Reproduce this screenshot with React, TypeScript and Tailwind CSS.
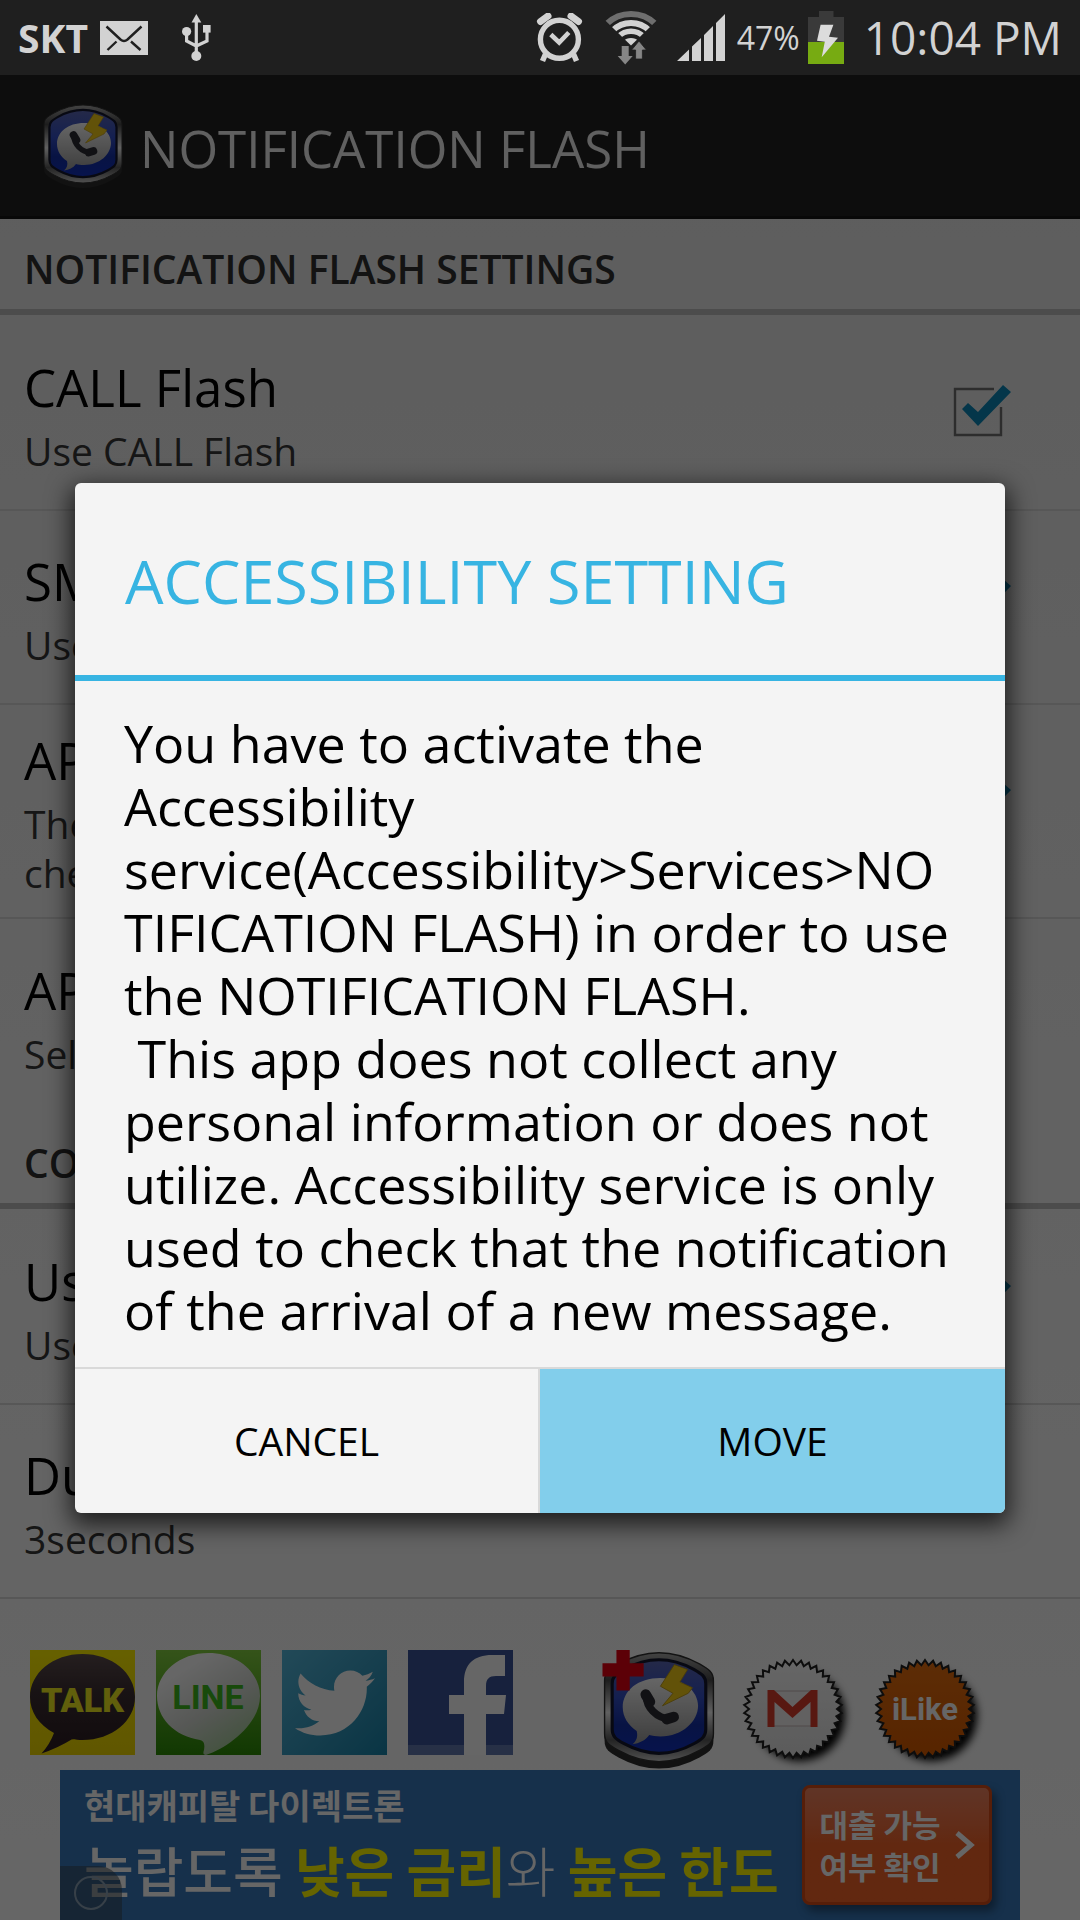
import React, { useId, useState } from "react";
import { FaTwitter } from "react-icons/fa";

function MailIcon() {
  return (
    <svg className="h-[34px] w-[48px] shrink-0" viewBox="0 0 48 34" aria-hidden="true">
      <rect width="48" height="34" fill="#d2d2d2" />
      <g fill="none" stroke="#1f1f1f" strokeWidth="2.4">
        <path d="M6.5 5.5 20.5 18.5Q24 21.5 27.5 18.5L41.5 5.5" />
        <path d="M7.5 29 16.5 20.5M31 20.5 40.5 29" />
      </g>
    </svg>
  );
}

function UsbIcon() {
  return (
    <svg className="h-[48px] w-[30px] shrink-0" viewBox="0 0 30 48" aria-hidden="true" fill="#d2d2d2">
      <path d="M14.3 0 19.3 8.5H9.5Z" />
      <circle cx="14.3" cy="42" r="5" />
      <circle cx="4.6" cy="17.5" r="4.6" />
      <rect x="21" y="11" width="7.6" height="7.6" />
      <path d="M14.3 6V40M4.6 18V27L14.3 32M25 18V27L14.3 32" fill="none" stroke="#d2d2d2" strokeWidth="3.2" />
    </svg>
  );
}

function AlarmIcon() {
  return (
    <svg className="h-[50px] w-[50px] shrink-0" viewBox="0 0 50 50" aria-hidden="true" fill="none" stroke="#d2d2d2">
      <circle cx="24.4" cy="26.3" r="19" strokeWidth="5.4" />
      <path d="M15.8 21.5 24.2 29.5 33.8 19.5" strokeWidth="4.6" />
      <path d="M10.5 41 7.5 48M38.5 41 41.5 48" strokeWidth="5.5" />
      <path d="M5.5 8.5 13 3M43.5 8.5 36 3" strokeWidth="7" strokeLinecap="round" />
    </svg>
  );
}

function WifiIcon() {
  return (
    <svg className="h-[54px] w-[52px] shrink-0" viewBox="0 0 52 54" aria-hidden="true">
      <defs>
        <clipPath id="wifi-wedge">
          <path d="M26 34.5-8 1.5V-4H60V1.5Z" />
        </clipPath>
      </defs>
      <g clipPath="url(#wifi-wedge)" fill="none">
        <circle cx="26" cy="38" r="35" stroke="#6e6e6e" strokeWidth="6" />
        <circle cx="26" cy="38" r="26" stroke="#d2d2d2" strokeWidth="6" />
        <circle cx="26" cy="38" r="17.8" stroke="#d2d2d2" strokeWidth="5.4" />
        <circle cx="26" cy="38" r="11" fill="#d2d2d2" />
      </g>
      <path d="M16.7 35H23.7V45H27.7L20.2 53.5 12.7 45H16.7Z" fill="#868686" />
      <path d="M30.6 48V39H26.6L34 30 41.4 39H37.4V48Z" fill="#868686" stroke="#1f1f1f" strokeWidth="0.8" />
    </svg>
  );
}

function SignalIcon() {
  return (
    <svg className="h-[47px] w-[48px] shrink-0" viewBox="0 0 48 47" aria-hidden="true" fill="#d2d2d2">
      <path d="M0 47 12 35.5V47ZM15 32.5 24 24V47H15ZM27 21 36 12V47H27ZM39 9 48 0V47H39Z" />
    </svg>
  );
}

function BatteryIcon() {
  return (
    <svg className="h-[53px] w-[36px] shrink-0" viewBox="0 0 36 53" aria-hidden="true">
      <path d="M11 0H25.5V6H36V31H0V6H11Z" fill="#3a3a3a" />
      <rect y="31" width="36" height="22" fill="#77ab12" />
      <path d="M12.6 13.7H25.4L21 25.7 30 26.7 13.7 46.3 16.8 30.7 9 29.7Z" fill="#dcdcdc" />
    </svg>
  );
}

const SHIELD =
  "M14 33C14 27 17 25 24 21Q53 5 82 21C89 25 92 27 92 33V71C92 77 89 79 82 83Q53 99 24 83C17 79 14 77 14 71Z";

function FlashIcon({ className, plus = false }: { className: string; plus?: boolean }) {
  const id = useId();
  return (
    <svg className={className} viewBox="12 11 82 86" aria-hidden="true">
      <defs>
        <linearGradient id={id + "rim"} x1="0" y1="0" x2="0" y2="1">
          <stop offset="0" stopColor="#a8a8a8" />
          <stop offset="0.25" stopColor="#4a4a4a" />
          <stop offset="0.55" stopColor="#f0f0f0" />
          <stop offset="0.8" stopColor="#5a5a5a" />
          <stop offset="1" stopColor="#c8c8c8" />
        </linearGradient>
        <linearGradient id={id + "face"} x1="0" y1="0" x2="0" y2="1">
          <stop offset="0" stopColor="#5c68b4" />
          <stop offset="0.4" stopColor="#3450c8" />
          <stop offset="0.7" stopColor="#1430a8" />
          <stop offset="1" stopColor="#1230c0" />
        </linearGradient>
        <linearGradient id={id + "bubble"} x1="0" y1="0" x2="0" y2="1">
          <stop offset="0" stopColor="#ffffff" />
          <stop offset="1" stopColor="#9a9a9a" />
        </linearGradient>
      </defs>
      <path d={SHIELD} transform="translate(0 5)" fill="#2e2e2e" />
      <path d={SHIELD} fill={`url(#${id}rim)`} stroke="#303030" strokeWidth="1" />
      <path d={SHIELD} transform="translate(7.4 6.8) scale(.86)" fill={`url(#${id}face)`} stroke="#14182e" strokeWidth="2.6" />
      <path
        d="M54 31C70 31 81 40 81 51S70 73 54 73C51 73 48 72.600 46 72 43 76 39 78 34 78.500 37 76 38 73 37 69 31 65 27 59 27 52 27 40 38 31 54 31Z"
        fill={`url(#${id}bubble)`}
      />
      <path d="M44 44C44 52 51 60 61 60.500" fill="none" stroke="#2c2c34" strokeWidth="5.400" />
      <path d="M43.500 43 46.500 48M58.500 60.500 63.500 59" fill="none" stroke="#2c2c34" strokeWidth="7.600" strokeLinecap="round" />
      <path d="M64 21.500 73.500 25 68 34 77 38 74 42 55.500 51 63 42 54 37Z" fill="#f5cc18" stroke="#b89410" strokeWidth="0.6" />
      {plus && <path d="M22.500 11H32V20.500H42V30H32V40H22.500V30H12.500V20.500H22.500Z" fill="#e60012" />}
    </svg>
  );
}

function TalkLogo() {
  return (
    <svg className="h-[105px] w-[105px]" viewBox="0 0 105 105" role="img" aria-label="KakaoTalk">
      <defs>
        <linearGradient id="talk-bubble" x1="0" y1="0" x2="0" y2="1">
          <stop offset="0" stopColor="#5c4c4e" />
          <stop offset="0.4" stopColor="#3c2e32" />
          <stop offset="1" stopColor="#2c1c22" />
        </linearGradient>
        <linearGradient id="talk-back" x1="0" y1="0" x2="0" y2="1">
          <stop offset="0" stopColor="#fff000" />
          <stop offset="1" stopColor="#f0d800" />
        </linearGradient>
      </defs>
      <rect width="105" height="105" fill="url(#talk-back)" />
      <path d="M52.500 4C82 4 105 23 105 47S82 90 52.500 90C49 90 45 90 42 89.300Q28 98 11.500 103.500 20 94 24 83C9 75 0 62 0 47 0 23 23 4 52.500 4Z" fill="url(#talk-bubble)" />
      <text x="52.500" y="62" textAnchor="middle" fontFamily="Roboto, sans-serif" fontWeight="900" fontSize="34" fill="#f2ee20">TALK</text>
    </svg>
  );
}

function LineLogo() {
  return (
    <svg className="h-[105px] w-[105px]" viewBox="0 0 105 105" role="img" aria-label="LINE">
      <defs>
        <linearGradient id="line-back" x1="0" y1="0" x2="0" y2="1">
          <stop offset="0" stopColor="#84d040" />
          <stop offset="1" stopColor="#2c8c06" />
        </linearGradient>
        <linearGradient id="line-bubble" x1="0.2" y1="0.2" x2="0.7" y2="1">
          <stop offset="0" stopColor="#ffffff" />
          <stop offset="0.5" stopColor="#d8dcd6" />
          <stop offset="1" stopColor="#a4cc98" />
        </linearGradient>
      </defs>
      <rect width="105" height="105" fill="url(#line-back)" />
      <path d="M52.500 3C81 3 104 22 104 46 104 74 72 98 50 105 47 105 47 103 48 100 49 94 48 91 44 90 18 86 1 68 1 46 1 22 24 3 52.500 3Z" fill="url(#line-bubble)" />
      <text x="52" y="59" textAnchor="middle" fontFamily="Roboto, sans-serif" fontWeight="700" fontSize="34" fill="#3eb81c">LINE</text>
    </svg>
  );
}

function FacebookLogo() {
  return (
    <svg className="h-[105px] w-[105px]" viewBox="0 0 105 105" role="img" aria-label="Facebook">
      <rect width="105" height="105" fill="#3b5398" />
      <rect y="95" width="105" height="10" fill="#6278b0" />
      <path d="M56 105V64H41V45H56V32C56 14 66 5 84 5H97V26H88C81 26 78 29 78 36V45H98L96 64H78V105Z" fill="#fff" />
    </svg>
  );
}

const TEETH = 38;
const GEAR = Array.from({ length: TEETH * 2 }, (_, i) => {
  const a = (Math.PI * i) / TEETH;
  const r = i % 2 ? 44 : 49;
  return `${(52 + r * Math.sin(a)).toFixed(1)},${(59 - r * Math.cos(a)).toFixed(1)}`;
}).join(" ");

function GearBadge({ label, top, bottom, children }: { label: string; top: string; bottom: string; children: React.ReactNode }) {
  const id = useId();
  return (
    <svg className="h-[120px] w-[120px]" viewBox="0 0 120 120" role="img" aria-label={label}>
      <defs>
        <linearGradient id={id + "fill"} x1="0" y1="0" x2="0" y2="1">
          <stop offset="0" stopColor={top} />
          <stop offset="1" stopColor={bottom} />
        </linearGradient>
        <filter id={id + "blur"} x="-20%" y="-20%" width="140%" height="140%">
          <feGaussianBlur stdDeviation="4" />
        </filter>
      </defs>
      <circle cx="59" cy="66" r="45" fill="#000" filter={`url(#${id}blur)`} />
      <polygon points={GEAR} fill={`url(#${id}fill)`} stroke="#222" strokeWidth="2" />
      {children}
    </svg>
  );
}

function CheckBox({ label }: { label: string }) {
  const [on, setOn] = useState(true);
  return (
    <span className="grid h-[60px] w-[60px] shrink-0">
      <input
        type="checkbox"
        aria-label={label}
        checked={on}
        onChange={() => setOn(!on)}
        className="col-start-1 row-start-1 appearance-none"
      />
      <svg className="pointer-events-none col-start-1 row-start-1" viewBox="0 0 60 60" aria-hidden="true">
        <path d="M42 6H3V52H49V24" fill="none" stroke="#707070" strokeWidth="2.4" />
        {on && <path d="M10 26 16 20 26 29 51 2 59 9 26 43Z" fill="#0c88b8" />}
      </svg>
    </span>
  );
}

function Row({ title, note, check = false, line = true }: { title: string; note: string; check?: boolean; line?: boolean }) {
  return (
    <li
      className={
        "flex min-h-[194px] items-center justify-between py-[20px] pr-[68px] pl-6 " +
        (line ? "border-b-2 border-[#dadada]" : "")
      }
    >
      <div className="flex flex-col gap-1">
        <span className="text-[51px] leading-[70px] text-black">{title}</span>
        <span className="text-[39px] leading-[49px] whitespace-pre-line text-[#383838]">{note}</span>
      </div>
      {check && <CheckBox label={title} />}
    </li>
  );
}

function SectionTitle({ children }: { children: React.ReactNode }) {
  return (
    <h2 className="mb-[2px] flex h-[96px] items-center border-b-6 border-[#bebebe] pt-2 pl-6 text-[39px] leading-[49px] font-semibold text-[#303030]">
      {children}
    </h2>
  );
}

function StatusBar() {
  return (
    <div className="flex h-[75px] items-center justify-between bg-[#1f1f1f] px-[18px] text-[#d2d2d2]">
      <div className="flex items-center">
        <span className="text-[39px] leading-[49px] font-bold">SKT</span>
        <span className="ml-3"><MailIcon /></span>
        <span className="ml-[34px]"><UsbIcon /></span>
      </div>
      <div className="flex items-center">
        <AlarmIcon />
        <span className="ml-5"><WifiIcon /></span>
        <span className="ml-5"><SignalIcon /></span>
        <span className="ml-3 text-[32px] leading-[49px]">47%</span>
        <span className="ml-2"><BatteryIcon /></span>
        <time className="ml-5 text-[46px] leading-[49px]">10:04 PM</time>
      </div>
    </div>
  );
}

function ShareRow() {
  return (
    <div className="flex h-[171px] items-start pt-[51px] pl-[30px]">
      <div className="flex gap-[21px]">
        <a href="#talk"><TalkLogo /></a>
        <a href="#line"><LineLogo /></a>
        <a
          href="#twitter"
          aria-label="Twitter"
          className="flex h-[105px] w-[105px] items-center justify-center bg-linear-to-br from-[#56b8dc] to-[#1684aa]"
        >
          <FaTwitter className="h-[80px] w-[80px] text-white" />
        </a>
        <a href="#facebook"><FacebookLogo /></a>
      </div>
      <a href="#plus" aria-label="Flash Plus" className="ml-[88px]">
        <FlashIcon className="h-[120px] w-[116px]" plus />
      </a>
      <div className="ml-6 flex gap-3">
        <a href="#mail">
          <GearBadge label="Gmail" top="#fff" bottom="#e4e4e4">
            <rect x="28" y="41" width="47" height="35" fill="#f6f2f2" stroke="#c8b8b8" strokeWidth="1" />
            <path d="M26.500 77V40H33L51.500 57 70 40H76.500V77H69.500V52L51.500 68 33.500 52V77Z" fill="#dc3c2c" />
          </GearBadge>
        </a>
        <a href="#like">
          <GearBadge label="iLike" top="#e87010" bottom="#d85a00">
            <text x="52" y="70" textAnchor="middle" fontFamily="Roboto, sans-serif" fontWeight="700" fontSize="31" fill="#fff">iLike</text>
          </GearBadge>
        </a>
      </div>
    </div>
  );
}

function AdBanner() {
  return (
    <a
      href="#ad"
      className="relative mx-[60px] flex h-[150px] items-center justify-between bg-[#3778bb] pr-[28px] pl-6 font-['Noto_Sans_CJK_KR',sans-serif] whitespace-nowrap text-white"
    >
      <span className="flex flex-col">
        <span className="text-[34px] leading-[50px] font-bold">현대캐피탈 다이렉트론</span>
        <span className="text-[54px] leading-[80px] font-medium">
          놀랍도록 <b className="text-[#fffa00]">낮은 금리</b>
          <span className="font-light">와</span> <b className="text-[#fffa00]">높은 한도</b>
        </span>
      </span>
      <span className="flex h-[120px] w-[190px] items-center justify-center gap-3 rounded-lg border-3 border-[#d84c18] bg-linear-to-b from-[#f08460] via-[#f46428] to-[#f46428] shadow-[4px_6px_10px_rgba(0,0,0,0.4)]">
        <span className="text-[31px] leading-[42px] font-bold">
          대출 가능
          <br />
          여부 확인
        </span>
        <svg className="h-[30px] w-[22px]" viewBox="0 0 22 30" aria-hidden="true">
          <path d="M4 3 18 15 4 27" fill="none" stroke="#fff" strokeWidth="5" />
        </svg>
      </span>
      <span className="absolute bottom-0 left-0 flex h-[54px] w-[62px] items-center justify-center rounded-tr-3xl bg-[#3c4854]/55">
        <span className="h-[34px] w-[34px] rounded-full border-2 border-[#8aa0b4]" />
      </span>
    </a>
  );
}

export default function App() {
  return (
    <div className="flex min-h-screen flex-col overflow-hidden bg-black font-['Open_Sans','Noto_Sans_CJK_KR',sans-serif]">
      <StatusBar />
      <div className="relative flex flex-1 flex-col bg-linear-to-b from-[#e8e8e8] to-white">
        <header className="flex h-[144px] items-center border-b-3 border-[#161616] bg-[#222] pl-[42px]">
          <FlashIcon className="h-[86px] w-[82px] shrink-0" />
          <h1 className="ml-4 pt-1 text-[51px] leading-[70px] text-[#f0f0f0]">NOTIFICATION FLASH</h1>
        </header>
        <main>
          <SectionTitle>NOTIFICATION FLASH SETTINGS</SectionTitle>
          <ul>
            <Row title="CALL Flash" note="Use CALL Flash" check />
            <Row title="SMS" note="Use" check />
            <Row title="APP" note={"The\nche"} check />
            <Row title="APP" note="Sele" line={false} />
          </ul>
          <SectionTitle>COM</SectionTitle>
          <ul>
            <Row title="Use" note="Use" check />
            <Row title="Dura" note="3seconds" />
          </ul>
          <ShareRow />
        </main>
        <AdBanner />

        <div className="absolute inset-0 flex items-center bg-black/60 px-[75px]">
          <section
            role="dialog"
            aria-modal="true"
            aria-labelledby="dialog-title"
            className="w-full overflow-hidden rounded-md bg-[#f4f4f4] shadow-[0_8px_24px_4px_rgba(0,0,0,0.7)]"
          >
            <h2
              id="dialog-title"
              className="flex h-[198px] items-center border-b-6 border-[#37b4e2] px-[50px] pt-1 text-[61px] leading-[70px] text-[#37b4e2]"
            >
              ACCESSIBILITY SETTING
            </h2>
            <p className="pt-[30px] pr-[49px] pb-[26px] pl-[49px] text-[52px] leading-[63px] break-words whitespace-pre-wrap text-black">
              {"You have to activate the Accessibility service(Accessibility>Services>NOTIFICATION FLASH) in order to use the NOTIFICATION FLASH.\n This app does not collect any personal information or does not utilize. Accessibility service is only used to check that the notification of the arrival of a new message."}
            </p>
            <div className="grid grid-cols-2 border-t-2 border-[#d9d9d9] text-[39px] leading-[49px] text-black">
              <button type="button" className="h-[144px] border-r-2 border-[#d9d9d9]">CANCEL</button>
              <button type="button" className="h-[144px] bg-[#82ceeb]">MOVE</button>
            </div>
          </section>
        </div>
      </div>
    </div>
  );
}
